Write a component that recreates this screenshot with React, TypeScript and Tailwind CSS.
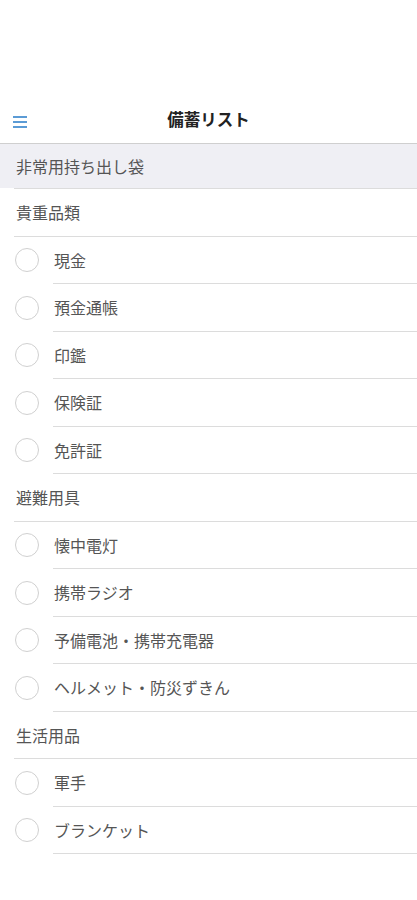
import React from 'react';

const font = { fontFamily: '"Noto Sans CJK JP", "Noto Sans", sans-serif' };

const sections = [
  { title: '貴重品類', items: ['現金', '預金通帳', '印鑑', '保険証', '免許証'] },
  { title: '避難用具', items: ['懐中電灯', '携帯ラジオ', '予備電池・携帯充電器', 'ヘルメット・防災ずきん'] },
  { title: '生活用品', items: ['軍手', 'ブランケット'] },
];

export default function App() {
  return (
    <div className="w-[417px] h-[900px] bg-white text-[#555]" style={font}>
      <div className="h-[96px]" />

      {/* Header */}
      <div className="relative h-[48px] flex items-center justify-center border-b border-[#cfcfcf]">
        <div className="absolute left-[13px] top-[20px] flex flex-col gap-[3px]">
          <span className="block w-[14px] h-[2px] bg-[#5b9bd5]" />
          <span className="block w-[14px] h-[2px] bg-[#5b9bd5]" />
          <span className="block w-[14px] h-[2px] bg-[#5b9bd5]" />
        </div>
        <h1 className="text-[16.5px] font-bold text-[#222]">備蓄リスト</h1>
      </div>

      {/* Bag name */}
      <div className="h-[44px] bg-[#efeff4] flex items-center pl-[16px] text-[16px]">
        非常用持ち出し袋
      </div>
      <div className="ml-[14px] border-t border-[#dcdcdc]" />

      {sections.map((section) => (
        <div key={section.title}>
          <div className="ml-[14px] h-[47.5px] flex items-center pl-[2px] border-b border-[#dcdcdc] text-[16px]">
            {section.title}
          </div>
          {section.items.map((item) => (
            <div key={item} className="flex items-center h-[47.5px]">
              <div className="w-[53px] flex justify-center pl-[1px]">
                <div className="w-[24px] h-[24px] rounded-full border border-[#d0d0d0]" />
              </div>
              <div className="flex-1 h-full flex items-center border-b border-[#dcdcdc] text-[16px] pl-[1px]">
                {item}
              </div>
            </div>
          ))}
        </div>
      ))}
    </div>
  );
}
